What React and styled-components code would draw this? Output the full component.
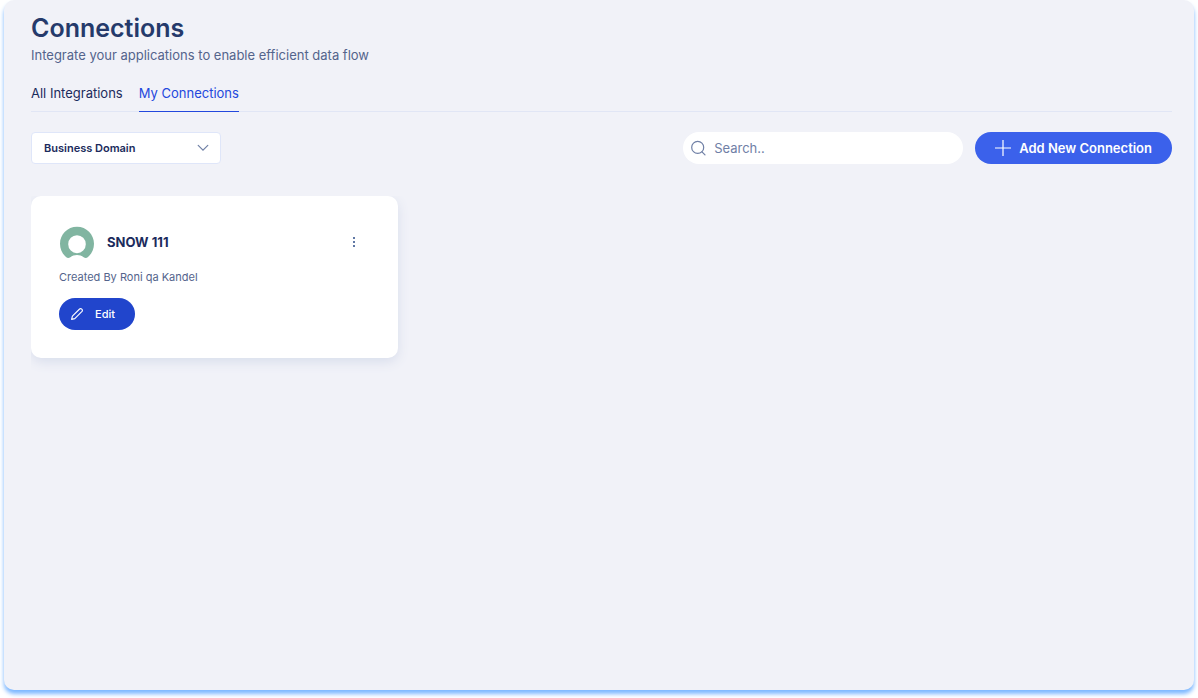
import { useState } from 'react'
import styled, { createGlobalStyle } from 'styled-components'

const vars = {
  navy: '#253a6b',
  darkNavy: '#1b2b5c',
  slate: '#54648c',
  icon: '#7080a6',
  blue: '#3b61eb',
  darkBlue: '#2145cc',
  link: '#2348dd',
  line: '#e1e6f5',
  panel: '#f1f2f8',
}

const connections = [
  { id: 1, name: 'SNOW 111', createdBy: 'Roni qa Kandel' },
]

const SearchIcon = () => (
  <svg width="15" height="16" viewBox="0 0 15 16" fill="none" stroke={vars.icon} strokeWidth="1.2" strokeLinecap="round" aria-hidden="true">
    <circle cx="6.7" cy="7.4" r="6" />
    <path d="M11 11.8 L14 14.8" />
  </svg>
)

const PlusIcon = () => (
  <svg width="16" height="16" viewBox="0 0 16 16" fill="none" stroke="#fff" strokeWidth="1.2" aria-hidden="true">
    <path d="M8 0 V16 M0 8 H16" />
  </svg>
)

const ChevronIcon = () => (
  <svg width="12" height="8" viewBox="0 0 12 8" fill="none" stroke={vars.icon} strokeWidth="1.2" strokeLinecap="round" aria-hidden="true">
    <path d="M1.2 1.4 L6 6.2 L10.8 1.4" />
  </svg>
)

const PencilIcon = () => (
  <svg width="12" height="12" viewBox="0 0 12 12" fill="none" stroke="#fff" strokeWidth="1.1" strokeLinejoin="round" aria-hidden="true">
    <path d="M0.6 11.4 L1.4 8.2 L8.6 1 Q9.7 0.1 10.8 1.2 Q11.9 2.3 11 3.4 L3.8 10.6 Z" />
  </svg>
)

const ServiceNowIcon = () => (
  <svg width="36" height="36" viewBox="0 0 36 36" aria-hidden="true">
    <path
      fill="#81b5a1"
      fillRule="evenodd"
      d="M18 2.8 C8.5 2.8 1 10.4 1 19.8 C1 25.2 3.3 29.8 7 33 C8.3 34.2 10 34.2 11.3 33.2 C13.2 31.8 15.5 31 18 31 C20.5 31 22.8 31.8 24.7 33.2 C26 34.2 27.7 34.2 29 33 C32.7 29.8 35 25.2 35 19.8 C35 10.4 27.5 2.8 18 2.8 Z M18 11.2 A8.8 9 0 0 1 18 29.2 A8.8 9 0 0 1 18 11.2 Z"
    />
  </svg>
)

const DotsIcon = () => (
  <svg width="4" height="12" viewBox="0 0 4 12" fill="#6078a5" aria-hidden="true">
    <rect x="1" y="1" width="2" height="2" />
    <rect x="1" y="5" width="2" height="2" />
    <rect x="1" y="9" width="2" height="2" />
  </svg>
)

const ConnectionCard = ({ name, createdBy }) => (
  <Card>
    <CardHead>
      <ServiceNowIcon />
      <CardTitle>{name}</CardTitle>
      <MenuBtn type="button" aria-label="More options">
        <DotsIcon />
      </MenuBtn>
    </CardHead>
    <CardMeta>Created By {createdBy}</CardMeta>
    <EditBtn type="button">
      <PencilIcon />
      Edit
    </EditBtn>
  </Card>
)

const App = () => {
  const [search, setSearch] = useState('')

  const visible = connections.filter(item =>
    item.name.toLowerCase().includes(search.toLowerCase())
  )

  return (<>
    <GlobalStyle />
    <Panel>
      <Title>Connections</Title>
      <Subtitle>Integrate your applications to enable efficient data flow</Subtitle>

      <Tabs aria-label="Connections">
        <Tab href="#all">All Integrations</Tab>
        <Tab href="#mine" $active aria-current="page">My Connections</Tab>
      </Tabs>

      <Toolbar>
        <SelectBox>
          <select aria-label="Business Domain" defaultValue="">
            <option value="">Business Domain</option>
          </select>
          <ChevronIcon />
        </SelectBox>

        <Actions>
          <SearchBox>
            <SearchIcon />
            <input
              type="text"
              aria-label="Search"
              placeholder="Search.."
              value={search}
              onChange={e => setSearch(e.target.value)}
            />
          </SearchBox>
          <AddBtn type="button">
            <PlusIcon />
            Add New Connection
          </AddBtn>
        </Actions>
      </Toolbar>

      <CardGrid>
        {visible.map(item => <ConnectionCard key={item.id} {...item} />)}
      </CardGrid>
    </Panel>
  </>)
}

const GlobalStyle = createGlobalStyle`
  * {
    box-sizing: border-box;
  }

  body {
    margin: 0;
    background: #fff;
    font-family: Inter, "Liberation Sans", sans-serif;
  }

  button, input, select {
    font-family: inherit;
  }

  button {
    border: none;
    cursor: pointer;
  }
`

const Panel = styled.main`
  min-height: calc(100vh - 8px);
  margin: 0 4px 8px;
  padding: 12px 22px 24px 27px;
  border-radius: 10px;
  background: ${vars.panel};
  box-shadow: 0 4px 4px #7db8ff;
`

const Title = styled.h1`
  margin: 0;
  font-size: 25px;
  line-height: 32px;
  font-weight: 600;
  color: ${vars.navy};
`

const Subtitle = styled.p`
  margin: 1px 0 0;
  font-size: 13px;
  line-height: 20px;
  color: ${vars.slate};
`

const Tabs = styled.nav`
  display: flex;
  gap: 16px;
  margin-top: 12px;
  box-shadow: inset 0 -1px ${vars.line};
`

const Tab = styled.a`
  padding: 6px 0 8px;
  border-bottom: 1px solid ${({ $active }) => $active ? vars.link : 'transparent'};
  font-size: 13px;
  line-height: 20px;
  text-decoration: none;
  color: ${({ $active }) => $active ? vars.link : vars.darkNavy};
`

const Toolbar = styled.div`
  display: flex;
  justify-content: space-between;
  margin-top: 20px;
`

const SelectBox = styled.div`
  display: grid;
  align-items: center;
  width: 190px;
  height: 32px;

  > * {
    grid-area: 1 / 1;
  }

  select {
    appearance: none;
    width: 100%;
    height: 100%;
    padding: 0 32px 0 12px;
    border: 1px solid #dfe6f9;
    border-radius: 4px;
    background: #fff;
    font-size: 11px;
    font-weight: 600;
    color: ${vars.darkNavy};
  }

  svg {
    justify-self: end;
    margin-right: 12px;
    pointer-events: none;
  }
`

const Actions = styled.div`
  display: flex;
  gap: 12px;
`

const SearchBox = styled.label`
  display: flex;
  align-items: center;
  gap: 8px;
  width: 280px;
  height: 32px;
  padding: 0 16px 0 8px;
  border-radius: 16px;
  background: #fff;

  svg {
    flex: none;
  }

  input {
    flex: 1;
    min-width: 0;
    padding: 0;
    border: none;
    outline: none;
    background: none;
    font-size: 13px;
    color: ${vars.darkNavy};
  }

  input::placeholder {
    color: ${vars.icon};
  }
`

const AddBtn = styled.button`
  display: flex;
  align-items: center;
  gap: 8px;
  height: 32px;
  padding: 0 20px;
  border-radius: 16px;
  background: ${vars.blue};
  font-size: 13px;
  font-weight: 600;
  white-space: nowrap;
  color: #fff;
`

const CardGrid = styled.section`
  display: grid;
  grid-template-columns: repeat(3, 1fr);
  gap: 20px;
  margin-top: 32px;
  padding-bottom: 20px;
  overflow: hidden;
`

const Card = styled.article`
  padding: 28px;
  border-radius: 10px;
  background: #fff;
  box-shadow: 0 4px 12px #d9deec;
`

const CardHead = styled.div`
  display: flex;
  align-items: center;
  gap: 12px;
  height: 36px;
`

const CardTitle = styled.h2`
  flex: 1;
  margin: 0;
  font-size: 13px;
  line-height: 20px;
  font-weight: 700;
  color: ${vars.darkNavy};
`

const MenuBtn = styled.button`
  display: grid;
  place-items: center;
  width: 32px;
  height: 32px;
  padding: 0;
  background: none;
`

const CardMeta = styled.p`
  margin: 7px 0 11px;
  font-size: 11px;
  line-height: 20px;
  color: ${vars.slate};
`

const EditBtn = styled.button`
  display: flex;
  align-items: center;
  gap: 12px;
  height: 32px;
  padding: 0 20px 0 12px;
  border-radius: 16px;
  background: ${vars.darkBlue};
  font-size: 11px;
  font-weight: 500;
  color: #fff;
`

export default App
